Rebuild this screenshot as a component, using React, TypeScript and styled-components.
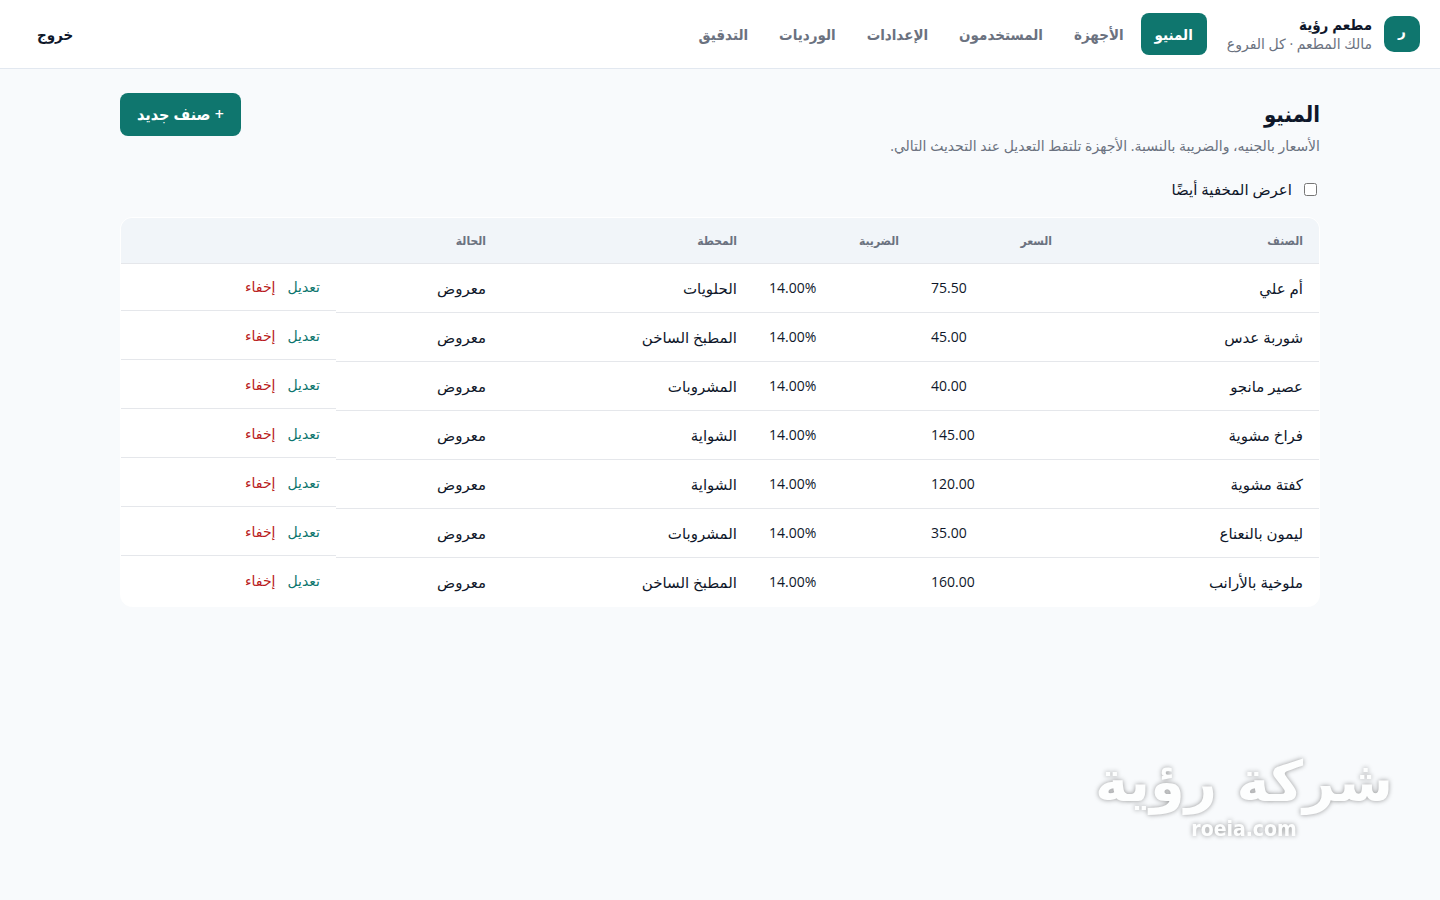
import React, { useState } from "react";
import styled, { createGlobalStyle } from "styled-components";

const colors = {
  brand: "#0f766e",
  ink: "#0f172a",
  muted: "#6b7280",
  line: "#e2e8f0",
  row: "#e5e7eb",
  page: "#f8fafc",
  head: "#f1f5f9",
  danger: "#b91c1c",
};

const strongFont = `"Open Sans", "DejaVu Sans Condensed", "DejaVu Sans", sans-serif`;

const GlobalStyle = createGlobalStyle`
  * { box-sizing: border-box; }
  body {
    margin: 0;
    background: ${colors.page};
    color: ${colors.ink};
    font-family: "Open Sans", "Noto Sans", "DejaVu Sans", sans-serif;
    font-size: 15px;
    line-height: 24px;
  }
  button, input { font: inherit; color: inherit; }
`;

const Page = styled.div`
  min-height: 100vh;
`;

const TopBar = styled.header`
  display: flex;
  align-items: center;
  gap: 20px;
  padding: 13px 20px;
  background: #fff;
  border-bottom: 1px solid ${colors.line};
`;

const Brand = styled.div`
  display: flex;
  align-items: center;
  gap: 12px;
`;

const Logo = styled.span`
  display: flex;
  justify-content: center;
  width: 36px;
  height: 36px;
  border-radius: 10px;
  background: ${colors.brand};
  color: #fff;
  font-family: ${strongFont};
  font-weight: 700;
  line-height: 28px;
`;

const BrandName = styled.div`
  font-family: ${strongFont};
  font-weight: 700;
  line-height: 20px;
`;

const BrandMeta = styled.div`
  font-size: 14px;
  line-height: 20px;
  color: ${colors.muted};
`;

const Nav = styled.nav`
  display: flex;
  flex: 1;
  gap: 3px;
`;

const NavLink = styled.a<{ $active?: boolean }>`
  padding: 9px 14px;
  border-radius: 8px;
  font-family: ${strongFont};
  font-weight: 600;
  text-decoration: none;
  color: ${(p) => (p.$active ? "#fff" : colors.muted)};
  background: ${(p) => (p.$active ? colors.brand : "transparent")};
`;

const Button = styled.button`
  padding: 9px 17px;
  border: 0;
  border-radius: 8px;
  font-family: ${strongFont};
  font-size: 16px;
  font-weight: 600;
  line-height: 25px;
  cursor: pointer;
  color: #fff;
  background: ${colors.brand};
`;

const GhostButton = styled(Button)`
  font-size: 15px;
  line-height: 24px;
  color: ${colors.ink};
  background: transparent;
`;

const Main = styled.main`
  max-width: 1248px;
  margin: 0 auto;
  padding: 24px;
`;

const Heading = styled.div`
  display: flex;
  justify-content: space-between;
  align-items: flex-start;
  gap: 16px;
`;

const Title = styled.h1`
  margin: 0;
  font-family: ${strongFont};
  font-size: 22px;
  font-weight: 700;
  line-height: 40px;
`;

const Subtitle = styled.p`
  margin: 0;
  font-size: 14px;
  line-height: 26px;
  color: ${colors.muted};
`;

const Toggle = styled.label`
  display: flex;
  align-items: center;
  gap: 12px;
  padding: 18px 3px 16px;
`;

const Tick = styled.input`
  width: 13px;
  height: 13px;
  margin: 0;
`;

const Card = styled.div`
  overflow: hidden;
  border: 1px solid #fff;
  border-radius: 12px;
  background: #fff;
`;

const Table = styled.table`
  width: 100%;
  table-layout: fixed;
  border-collapse: separate;
  border-spacing: 0;
`;

const HeadCell = styled.th`
  padding: 10px 16px;
  text-align: right;
  font-family: ${strongFont};
  font-size: 12px;
  font-weight: 700;
  line-height: 25px;
  color: ${colors.muted};
  background: ${colors.head};
  border-bottom: 1px solid ${colors.row};
`;

const Row = styled.tr`
  &:last-child td { border-bottom: 0; }
`;

const Cell = styled.td`
  padding: 12px 16px;
  text-align: start;
  border-bottom: 1px solid ${colors.row};
`;

const NumberCell = styled(Cell)`
  font-size: 14px;
`;

const Actions = styled(Cell)`
  display: flex;
  gap: 12px;
`;

const TextButton = styled.button<{ $danger?: boolean }>`
  padding: 0;
  border: 0;
  background: none;
  font-size: 14px;
  line-height: 22px;
  cursor: pointer;
  color: ${(p) => (p.$danger ? colors.danger : colors.brand)};
`;

const Watermark = styled.aside`
  position: fixed;
  right: 47px;
  bottom: 57px;
  display: flex;
  flex-direction: column;
  align-items: center;
  font-family: "DejaVu Sans", sans-serif;
  font-weight: 700;
  color: #fdfefe;
  text-shadow: 0 0 5px rgba(0, 0, 0, 0.4);
  pointer-events: none;
`;

const WatermarkName = styled.span`
  font-size: 56px;
  line-height: 66px;
`;

const WatermarkSite = styled.span`
  font-family: "DejaVu Sans Condensed", "DejaVu Sans", sans-serif;
  font-size: 21px;
  line-height: 28px;
`;

const links = ["المنيو", "الأجهزة", "المستخدمون", "الإعدادات", "الورديات", "التدقيق"];
const headers = ["الصنف", "السعر", "الضريبة", "المحطة", "الحالة", ""];
const columnWidths = [251, 153, 162, 251, 166, 215];
const items = [
  { name: "أم علي", price: "75.50", station: "الحلويات" },
  { name: "شوربة عدس", price: "45.00", station: "المطبخ الساخن" },
  { name: "عصير مانجو", price: "40.00", station: "المشروبات" },
  { name: "فراخ مشوية", price: "145.00", station: "الشواية" },
  { name: "كفتة مشوية", price: "120.00", station: "الشواية" },
  { name: "ليمون بالنعناع", price: "35.00", station: "المشروبات" },
  { name: "ملوخية بالأرانب", price: "160.00", station: "المطبخ الساخن" },
];

export default function App() {
  const [showHidden, setShowHidden] = useState(false);
  return (
    <Page dir="rtl" lang="ar">
      <GlobalStyle />
      <TopBar>
        <Brand>
          <Logo>ر</Logo>
          <div>
            <BrandName>مطعم رؤية</BrandName>
            <BrandMeta>مالك المطعم · كل الفروع</BrandMeta>
          </div>
        </Brand>
        <Nav>
          {links.map((label, i) => (
            <NavLink key={label} href="#" $active={i === 0}>{label}</NavLink>
          ))}
        </Nav>
        <GhostButton type="button">خروج</GhostButton>
      </TopBar>
      <Main>
        <Heading>
          <div>
            <Title>المنيو</Title>
            <Subtitle>الأسعار بالجنيه، والضريبة بالنسبة. الأجهزة تلتقط التعديل عند التحديث التالي.</Subtitle>
          </div>
          <Button type="button">+ صنف جديد</Button>
        </Heading>
        <Toggle>
          <Tick type="checkbox" checked={showHidden} onChange={(e) => setShowHidden(e.target.checked)} />
          اعرض المخفية أيضًا
        </Toggle>
        <Card>
          <Table>
            <colgroup>
              {columnWidths.map((w, i) => <col key={i} width={w} />)}
            </colgroup>
            <thead>
              <tr>{headers.map((h, i) => <HeadCell key={i} scope="col">{h}</HeadCell>)}</tr>
            </thead>
            <tbody>
              {items.map((item) => (
                <Row key={item.name}>
                  <Cell>{item.name}</Cell>
                  <NumberCell dir="ltr">{item.price}</NumberCell>
                  <NumberCell dir="ltr">14.00%</NumberCell>
                  <Cell>{item.station}</Cell>
                  <Cell>معروض</Cell>
                  <Actions>
                    <TextButton type="button">تعديل</TextButton>
                    <TextButton type="button" $danger>إخفاء</TextButton>
                  </Actions>
                </Row>
              ))}
            </tbody>
          </Table>
        </Card>
      </Main>
      <Watermark>
        <WatermarkName>شركة رؤية</WatermarkName>
        <WatermarkSite>roeia.com</WatermarkSite>
      </Watermark>
    </Page>
  );
}
